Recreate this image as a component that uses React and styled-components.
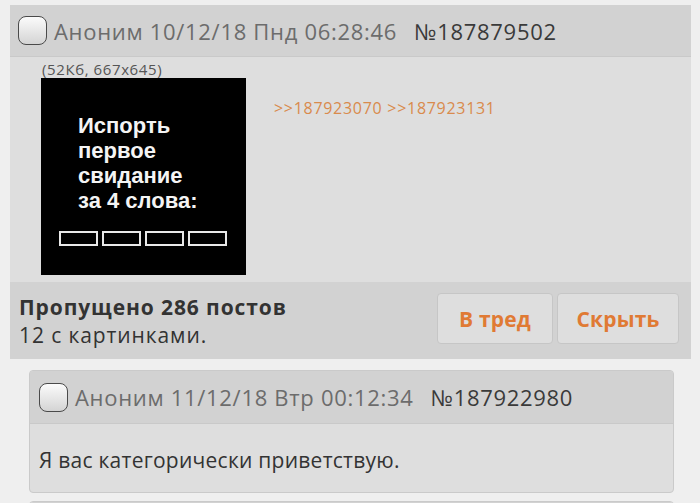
import styled, { createGlobalStyle } from "styled-components"

const Global = createGlobalStyle`
    body {
        margin: 0;
        background: #efefef;
        font-family: "Open Sans", "DejaVu Sans", sans-serif;
        color: #333;
    }
`

const Page = styled.div`
    padding: 5px 0 0 10px;
    width: 681px;
`

const Thread = styled.div`
    background: #dedede;
`

const Header = styled.div`
    height: ${p => p.h}px;
    display: flex;
    align-items: center;
    padding-left: ${p => p.pl}px;
    background: #d2d2d2;
    border-bottom: 1px solid #c9c9c9;
    box-sizing: border-box;
    font-size: 22px;
    letter-spacing: 0.7px;
    color: #6c6c6c;
    white-space: nowrap;
`

const Check = styled.span`
    width: 29px;
    height: 29px;
    box-sizing: border-box;
    border: 1.5px solid #4a4a4a;
    border-radius: 8px;
    background: linear-gradient(#fbfbfb, #d4d4d4);
    margin-right: 7px;
    flex-shrink: 0;
`

const Num = styled.span`
    color: #3a3a3a;
    margin-left: 17px;
`

const Body = styled.div`
    height: 225px;
    box-sizing: border-box;
    padding: 3px 0 0 31px;
    display: flex;
`

const FileCol = styled.div`
    display: flex;
    flex-direction: column;
`

const FileInfo = styled.div`
    font-size: 15px;
    letter-spacing: 0.6px;
    color: #555;
    line-height: 18px;
    padding-left: 1px;
`

const Pic = styled.div`
    width: 205px;
    height: 197px;
    background: #000;
    box-sizing: border-box;
    padding: 35px 0 0 37px;
    font-family: "Liberation Sans", Arial, sans-serif;
    font-weight: bold;
    font-size: 22px;
    line-height: 25px;
    color: #f4f4f4;
`

const Blanks = styled.div`
    display: flex;
    gap: 4px;
    margin: 18px 0 0 -19px;
`

const Blank = styled.span`
    width: 39px;
    height: 15px;
    box-sizing: border-box;
    border: 2px solid #e8e8e8;
`

const Replies = styled.div`
    margin: 37px 0 0 28px;
    font-size: 16px;
    letter-spacing: 0.7px;
    color: #d98a4c;
    display: flex;
    gap: 5px;
    align-self: flex-start;
`

const Omitted = styled.div`
    height: 77px;
    background: #d2d2d2;
    display: flex;
    align-items: center;
    justify-content: space-between;
    padding: 0 12px 0 9px;
    box-sizing: border-box;
    font-size: 21px;
    letter-spacing: 0.9px;
    line-height: 28px;
    color: #333;
    b {
        font-weight: 700;
    }
`

const Buttons = styled.div`
    display: flex;
    gap: 4px;
    margin-top: -4px;
`

const Button = styled.button`
    width: ${p => p.w}px;
    height: 51px;
    background: #dedede;
    border: 1px solid #c6c6c6;
    border-radius: 4px;
    font-family: inherit;
    font-size: 21px;
    letter-spacing: 0.2px;
    font-weight: 700;
    color: #e07a34;
    cursor: pointer;
`

const Reply = styled.div`
    margin: ${p => p.mt}px 0 0 19px;
    width: 643px;
    background: #dedede;
    border: 1px solid #cacaca;
    border-radius: 4px;
    overflow: hidden;
`

const Text = styled.div`
    height: 68px;
    display: flex;
    align-items: center;
    padding: 3px 0 0 9px;
    box-sizing: border-box;
    font-size: 21px;
    letter-spacing: 0.25px;
    color: #333;
`

export default function App() {
    return (
        <>
            <Global />
            <Page>
                <Thread>
                    <Header h={52} pl={8}>
                        <Check />
                        Аноним 10/12/18 Пнд 06:28:46
                        <Num>№187879502</Num>
                    </Header>
                    <Body>
                        <FileCol>
                            <FileInfo>(52Кб, 667x645)</FileInfo>
                            <Pic>
                                Испорть<br />первое<br />свидание<br />за 4 слова:
                                <Blanks>
                                    <Blank /><Blank /><Blank /><Blank />
                                </Blanks>
                            </Pic>
                        </FileCol>
                        <Replies>
                            <span>&gt;&gt;187923070</span>
                            <span>&gt;&gt;187923131</span>
                        </Replies>
                    </Body>
                    <Omitted>
                        <div>
                            <b>Пропущено 286 постов</b><br />
                            12 с картинками.
                        </div>
                        <Buttons>
                            <Button w={116}>В тред</Button>
                            <Button w={122}>Скрыть</Button>
                        </Buttons>
                    </Omitted>
                </Thread>
                <Reply mt={11}>
                    <Header h={53} pl={9}>
                        <Check />
                        Аноним 11/12/18 Втр 00:12:34
                        <Num>№187922980</Num>
                    </Header>
                    <Text>Я вас категорически приветствую.</Text>
                </Reply>
                <Reply mt={8}>
                    <Header h={53} pl={9} />
                </Reply>
            </Page>
        </>
    )
}
